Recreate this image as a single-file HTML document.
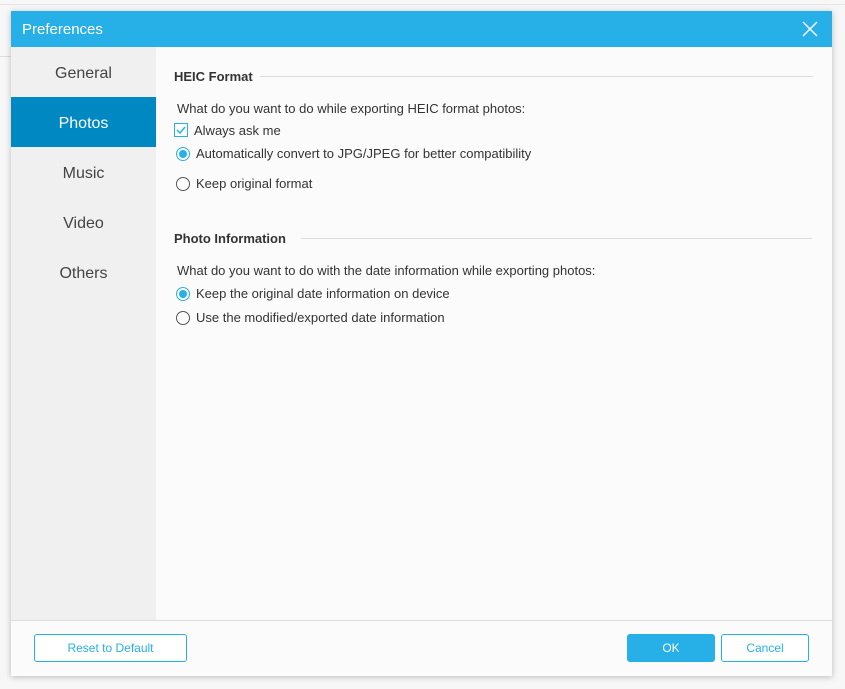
<!DOCTYPE html>
<html><head><meta charset="utf-8"><style>
body{margin:0;width:845px;height:689px;background:#f7f7f7;position:relative;overflow:hidden;font-family:"Liberation Sans",sans-serif;}
.bgline{position:absolute;left:0;top:4px;width:845px;height:1px;background:#e6e6e6}
.bgline2{position:absolute;left:0;top:56px;width:12px;height:1px;background:#ddd}
.dlg{position:absolute;left:11px;top:11px;width:821px;height:665px;background:#fbfbfb;box-shadow:0 1px 6px rgba(0,0,0,.25)}
.title{position:absolute;left:0;top:0;width:821px;height:36px;background:#27b0e8;color:#fff;font-size:15px;line-height:38px;padding-left:11px;box-sizing:border-box}
.close{position:absolute;right:14px;top:10px}
.side{position:absolute;left:0;top:36px;width:145px;height:573px;background:#f0f0f0}
.side div{height:50px;line-height:54px;text-align:center;font-size:16px;color:#444}
.side div.sel{background:#0088c2;color:#fff}
.foot{position:absolute;left:0;top:609px;width:821px;height:1px;background:#ddd}
.btn{position:absolute;top:623px;height:26px;border:1px solid #27b0e8;border-radius:3px;color:#27b0e8;font-size:12px;text-align:center;line-height:27px;background:#fff}
.t{position:absolute;font-size:13px;color:#333;white-space:nowrap}
.h{position:absolute;font-size:13px;font-weight:bold;color:#333}
.hl{position:absolute;height:1px;background:#ddd}
.r{position:absolute;width:12px;height:12px;border:1px solid #555;border-radius:50%;background:#fff}
.r.on{border-color:#27b0e8}
.r.on::after{content:"";position:absolute;left:2px;top:2px;width:8px;height:8px;border-radius:50%;background:#27b0e8}
</style></head><body>
<div class="bgline"></div><div class="bgline2"></div>
<div class="dlg">
<div class="title">Preferences
<svg class="close" width="16" height="16" viewBox="0 0 16 16"><path d="M1 1L15 15M15 1L1 15" stroke="#fff" stroke-width="1.5"/></svg></div>
<div class="side"><div>General</div><div class="sel">Photos</div><div>Music</div><div>Video</div><div>Others</div></div>
<div class="h" style="left:163px;top:58px">HEIC Format</div>
<div class="hl" style="left:249px;top:65px;width:553px"></div>
<div class="t" style="left:166px;top:90px">What do you want to do while exporting HEIC format photos:</div>
<svg style="position:absolute;left:163px;top:112px" width="14" height="14" viewBox="0 0 14 14"><rect x=".5" y=".5" width="13" height="13" fill="#fff" stroke="#27b0e8"/><path d="M3 7l3 3 5-6" fill="none" stroke="#27b0e8" stroke-width="1.5"/></svg>
<div class="t" style="left:183px;top:112px">Always ask me</div>
<div class="r on" style="left:165px;top:136px"></div>
<div class="t" style="left:185px;top:135px">Automatically convert to JPG/JPEG for better compatibility</div>
<div class="r" style="left:165px;top:166px"></div>
<div class="t" style="left:185px;top:165px">Keep original format</div>
<div class="h" style="left:163px;top:220px">Photo Information</div>
<div class="hl" style="left:290px;top:227px;width:511px"></div>
<div class="t" style="left:166px;top:252px">What do you want to do with the date information while exporting photos:</div>
<div class="r on" style="left:165px;top:276px"></div>
<div class="t" style="left:185px;top:275px">Keep the original date information on device</div>
<div class="r" style="left:165px;top:300px"></div>
<div class="t" style="left:185px;top:299px">Use the modified/exported date information</div>
<div class="foot"></div>
<div class="btn" style="left:23px;width:151px">Reset to Default</div>
<div class="btn" style="left:616px;width:86px;background:#27b0e8;color:#fff">OK</div>
<div class="btn" style="left:710px;width:86px">Cancel</div>
</div>
</body></html>
